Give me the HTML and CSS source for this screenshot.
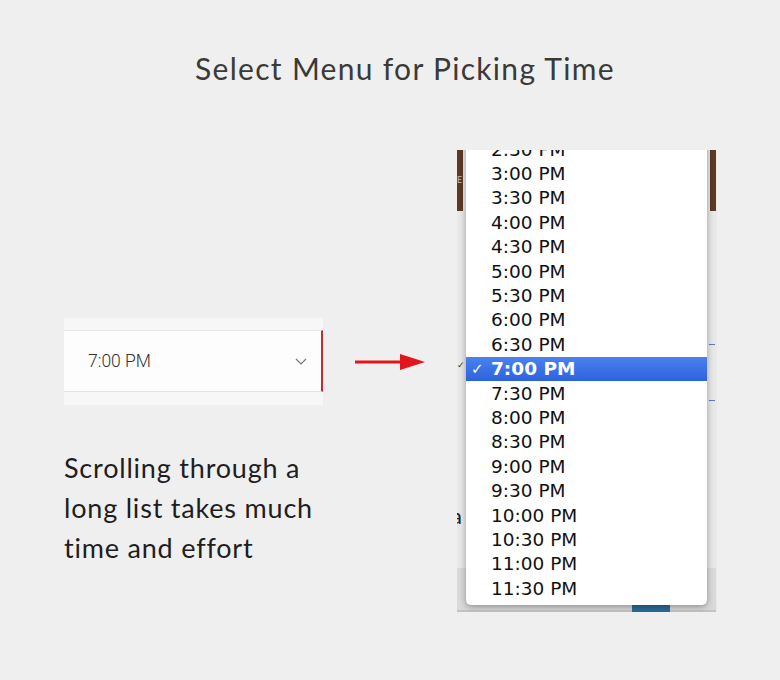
FILE: index.html
```html
<!DOCTYPE html>
<html lang="en">
<head>
    <meta charset="UTF-8">
    <title>Select Menu for Picking Time</title>
    <link rel="stylesheet" href="styles.css">
</head>
<body>
    <h1 class="title">Select Menu for Picking Time</h1>

    <div class="stage">
        <div class="left-col">
            <div class="picker">
                <div class="picker-field">
                    <span>7:00 PM</span>
                    <svg class="chevron" width="12" height="7" viewBox="0 0 12 7">
                        <path d="M1 1 L6 6 L11 1" fill="none" stroke="#777" stroke-width="1.2"/>
                    </svg>
                </div>
            </div>
            <p class="caption">Scrolling through a<br>long list takes much<br>time and effort</p>
        </div>

        <svg class="arrow" width="70" height="20" viewBox="0 0 70 20">
            <line x1="0" y1="10" x2="48" y2="10" stroke="#e3151c" stroke-width="3"/>
            <polygon points="45,2 70,10 45,18" fill="#e3151c"/>
        </svg>

        <div class="shot">
            <span class="bar bar-left">E</span>
            <span class="bar bar-right"></span>
            <span class="old-tick">✓</span>
            <span class="side-mark mark-top"></span>
            <span class="side-mark mark-bottom"></span>
            <span class="stray">a</span>
            <span class="bottom-strip"></span>
            <span class="blue-chip"></span>

            <ul class="menu">
                <li><span class="tick"></span>2:30 PM</li>
                <li><span class="tick"></span>3:00 PM</li>
                <li><span class="tick"></span>3:30 PM</li>
                <li><span class="tick"></span>4:00 PM</li>
                <li><span class="tick"></span>4:30 PM</li>
                <li><span class="tick"></span>5:00 PM</li>
                <li><span class="tick"></span>5:30 PM</li>
                <li><span class="tick"></span>6:00 PM</li>
                <li><span class="tick"></span>6:30 PM</li>
                <li class="selected"><span class="tick">✓</span>7:00 PM</li>
                <li><span class="tick"></span>7:30 PM</li>
                <li><span class="tick"></span>8:00 PM</li>
                <li><span class="tick"></span>8:30 PM</li>
                <li><span class="tick"></span>9:00 PM</li>
                <li><span class="tick"></span>9:30 PM</li>
                <li><span class="tick"></span>10:00 PM</li>
                <li><span class="tick"></span>10:30 PM</li>
                <li><span class="tick"></span>11:00 PM</li>
                <li><span class="tick"></span>11:30 PM</li>
            </ul>
        </div>
    </div>
</body>
</html>
```

FILE: styles.css
```css
body {
    margin: 0;
    width: 780px;
    height: 680px;
    background-color: #efefef;
    font-family: Lato, "Liberation Sans", sans-serif;
    color: #222;
    overflow: hidden;
}

.title {
    margin: 0;
    padding: 50px 0 0 30px;
    font-size: 30px;
    font-weight: normal;
    letter-spacing: 1.3px;
    line-height: 36px;
    text-align: center;
    color: #3a3a3a;
}

.stage {
    display: flex;
    align-items: flex-start;
    margin-top: 64px;
    padding-left: 64px;
}

.left-col {
    width: 259px;
}

.picker {
    margin-top: 168px;
    height: 87px;
    background-color: #f7f7f7;
    padding-top: 12px;
    box-sizing: border-box;
}

.picker-field {
    display: flex;
    align-items: center;
    justify-content: space-between;
    height: 60px;
    padding: 0 14px 0 24px;
    background-color: #fdfdfd;
    border-top: 1px solid #e6e6e6;
    border-bottom: 1px solid #e2e2e2;
    border-right: 2px solid #cf2a2a;
    font-family: Roboto, "Liberation Sans", sans-serif;
    font-size: 17.5px;
    font-weight: 300;
    color: #333;
}

.caption {
    margin: 43px 0 0 0;
    font-size: 27px;
    letter-spacing: 0.8px;
    line-height: 40px;
    white-space: nowrap;
    color: #1e1e1e;
}

.arrow {
    margin: 202px 32px 0 32px;
}

/* picture of the page behind the opened menu */
.shot {
    position: relative;
    width: 260px;
    height: 462px;
    background-color: #e9e9e9;
    overflow: hidden;
}

.bar {
    position: absolute;
    top: 0;
    width: 6px;
    height: 61px;
    background-color: #5b3a26;
}

.bar-left {
    left: 0;
    color: #c9b8a8;
    font-size: 9px;
    line-height: 60px;
    overflow: hidden;
}

.bar-right {
    right: 1px;
}

.old-tick {
    position: absolute;
    left: 0;
    top: 209px;
    font-size: 9px;
    color: #333;
}

.side-mark {
    position: absolute;
    right: 2px;
    width: 6px;
    height: 1px;
    background-color: #5a7db0;
}

.mark-top { top: 194px; }
.mark-bottom { top: 250px; }

.stray {
    position: absolute;
    left: -6px;
    top: 352px;
    font-size: 22px;
    color: #222;
}

.bottom-strip {
    position: absolute;
    left: 0;
    right: 1px;
    top: 418px;
    height: 42px;
    background-color: #dadada;
    border-bottom: 2px solid #c4c4c4;
}

.blue-chip {
    position: absolute;
    left: 175px;
    top: 455px;
    width: 38px;
    height: 7px;
    background-color: #2b6c98;
}

.menu {
    position: absolute;
    left: 9px;
    top: -13px;
    width: 241px;
    margin: 0;
    padding: 0 0 5px 0;
    list-style: none;
    background-color: #fff;
    border-radius: 0 0 5px 5px;
    box-shadow: 0 2px 7px rgba(0, 0, 0, 0.35);
    font-family: "DejaVu Sans", sans-serif;
    font-size: 18.5px;
    color: #111;
}

.menu li {
    display: flex;
    align-items: center;
    height: 24.4px;
}

.tick {
    width: 25px;
    padding-left: 5px;
    box-sizing: border-box;
    font-size: 15px;
    font-weight: bold;
}

.menu li.selected {
    background: linear-gradient(#4a82ee, #2d62de);
    color: #fff;
    font-weight: bold;
}
```
